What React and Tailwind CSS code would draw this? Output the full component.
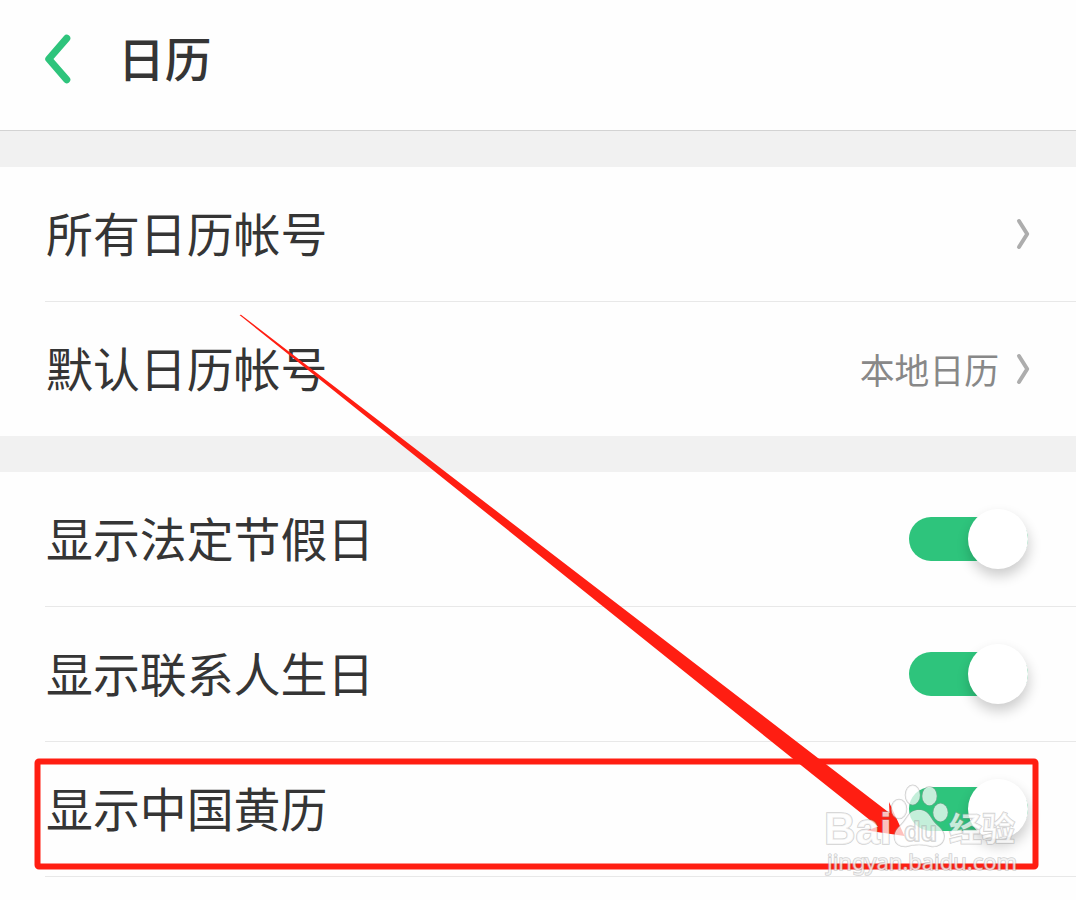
import React, { useState } from 'react';

function App() {
    const [ajustes, setAjustes] = useState({ feriados: true, aniversarios: true, almanaque: true });

    const alternar = (chave) => setAjustes({ ...ajustes, [chave]: !ajustes[chave] });

    return (
        <div className="relative h-[900px] w-[1076px] overflow-hidden bg-[#fefefe] font-['Noto_Sans_CJK_SC',sans-serif] text-[#353535]">
            <header className="flex h-[131px] items-start border-b border-[#d3d3d3] pl-[45px]">
                <button className="mt-[34px]" aria-label="返回">
                    <svg width="26" height="50" viewBox="0 0 26 50" fill="none">
                        <path d="M21.7 4.3 L3.8 25 L21.7 45.7" stroke="#2ec47c" strokeWidth="7.2" strokeLinecap="round" strokeLinejoin="round" />
                    </svg>
                </button>
                <h1 className="ml-[47px] mt-[32px] text-[46.7px] leading-[50px] font-medium">日历</h1>
            </header>

            <div className="h-9 bg-[#f1f1f1]" />

            <section>
                <Linha titulo="所有日历帐号">
                    <Seta />
                </Linha>
                <Linha titulo="默认日历帐号" ultima>
                    <span className="mr-[17px] text-[34.8px] leading-[50px] text-[#888]">本地日历</span>
                    <Seta />
                </Linha>
            </section>

            <div className="h-9 bg-[#f1f1f1]" />

            <section>
                <Linha titulo="显示法定节假日">
                    <Chave ligada={ajustes.feriados} onClick={() => alternar('feriados')} />
                </Linha>
                <Linha titulo="显示联系人生日">
                    <Chave ligada={ajustes.aniversarios} onClick={() => alternar('aniversarios')} />
                </Linha>
                <Linha titulo="显示中国黄历">
                    <Chave ligada={ajustes.almanaque} onClick={() => alternar('almanaque')} />
                </Linha>
            </section>

            <Destaque />
            <Marca />
        </div>
    );
}

function Linha({ titulo, ultima, children }) {
    return (
        <div className={ultima ? 'ml-[45px] h-[134px]' : 'ml-[45px] h-[135px] border-b border-[#e8e8e8]'}>
            <div className="flex h-[134px] items-center justify-between pr-[46px]">
                <span className="pb-[5px] pl-px text-[46.9px] leading-[60px]">{titulo}</span>
                <div className="flex items-center">{children}</div>
            </div>
        </div>
    );
}

function Seta() {
    return (
        <svg width="14" height="32" viewBox="0 0 14 32" fill="none">
            <path d="M3 3 L11.2 16 L3 29" stroke="#adadad" strokeWidth="4" strokeLinecap="round" strokeLinejoin="round" />
        </svg>
    );
}

function Chave({ ligada, onClick }) {
    return (
        <button
            role="switch"
            aria-checked={ligada}
            onClick={onClick}
            className={`mr-[2px] flex h-11 w-[119px] items-center rounded-full ${ligada ? 'justify-end bg-[#2ec47c]' : 'bg-[#d8d8d8]'}`}
        >
            <span className="size-[60px] shrink-0 rounded-full bg-white shadow-[1px_7px_13px_rgba(0,0,0,0.2)]" />
        </button>
    );
}

// moldura vermelha e seta por cima da lista
function Destaque() {
    return (
        <svg className="pointer-events-none absolute inset-0" width="1076" height="900" viewBox="0 0 1076 900">
            <rect x="37.5" y="761.5" width="998" height="105" rx="1.5" fill="none" stroke="#ff1e12" strokeWidth="6" />
            <path d="M239.5 315 L241 314.8 L889.5 813 L889 802 L904.5 836 L867 830.5 L878 826.5 L812 774 Z" fill="#ff1e12" />
        </svg>
    );
}

function Marca() {
    return (
        <svg
            className="pointer-events-none absolute left-[820px] top-[776px]"
            width="210"
            height="110"
            viewBox="820 776 210 110"
            fill="#fff"
            fillOpacity="0.72"
            stroke="#999"
            strokeOpacity="0.45"
            strokeWidth="1.6"
            paintOrder="stroke"
        >
            <ellipse cx="899" cy="809" rx="7.5" ry="9.5" />
            <ellipse cx="912.7" cy="795" rx="7.2" ry="9.7" />
            <ellipse cx="929.5" cy="796" rx="7.2" ry="9.2" />
            <ellipse cx="940.5" cy="812.5" rx="7.2" ry="9" />
            <path d="M919 810 C930 810 930 820 938 826 C949 835 944 847 932 846.5 C924 844 914 844 906 846.5 C893 847 891 834 900 826 C908 819 908 810 919 810 Z" />
            <text x="824" y="844" fontSize="44" fontWeight="700" fontFamily="Liberation Sans, sans-serif" textLength="68" lengthAdjust="spacingAndGlyphs">Bai</text>
            <text x="904" y="841" fontSize="27" fontWeight="700" fontFamily="Liberation Sans, sans-serif" fillOpacity="0.35">du</text>
            <text x="949" y="841" fontSize="33" fontWeight="700" fontFamily="Noto Sans CJK SC, sans-serif">经验</text>
            <text x="827" y="870" fontSize="21" fontFamily="Noto Sans, sans-serif" textLength="190" lengthAdjust="spacingAndGlyphs">jingyan.baidu.com</text>
        </svg>
    );
}

export default App;
